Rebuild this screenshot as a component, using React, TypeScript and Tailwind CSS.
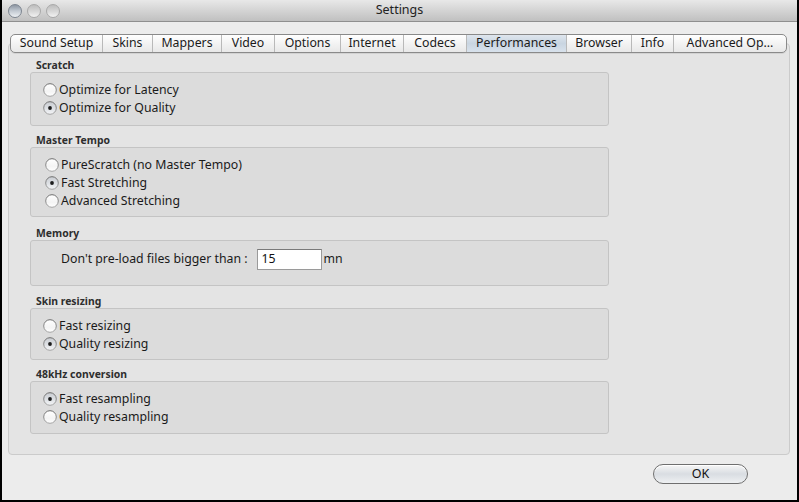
import React from "react";

const font = { fontFamily: '"Lucida Grande", "Noto Sans", "DejaVu Sans", sans-serif' };

function Radio({ checked }: { checked?: boolean }) {
  return (
    <svg width="14" height="14" viewBox="0 0 14 14" className="shrink-0">
      <defs>
        <linearGradient id={checked ? "rc" : "ru"} x1="0" y1="0" x2="0" y2="1">
          {checked ? (
            <>
              <stop offset="0" stopColor="#c9ccd1" />
              <stop offset="0.5" stopColor="#dcdfe3" />
              <stop offset="1" stopColor="#f4f5f7" />
            </>
          ) : (
            <>
              <stop offset="0" stopColor="#ffffff" />
              <stop offset="0.6" stopColor="#f4f4f4" />
              <stop offset="1" stopColor="#ffffff" />
            </>
          )}
        </linearGradient>
        <linearGradient id="rb" x1="0" y1="0" x2="0" y2="1">
          <stop offset="0" stopColor="#6d6d6d" />
          <stop offset="1" stopColor="#a5a5a5" />
        </linearGradient>
      </defs>
      <circle cx="7" cy="7" r="6.3" fill={`url(#${checked ? "rc" : "ru"})`} stroke="url(#rb)" strokeWidth="1" />
      {checked && <circle cx="7" cy="7" r="1.9" fill="#1c1c1c" />}
    </svg>
  );
}

function RadioRow({ label, checked }: { label: string; checked?: boolean }) {
  return (
    <div className="flex items-center h-[18px] gap-[2px]">
      <Radio checked={checked} />
      <span className="text-[12.3px] text-[#1a1a1a] leading-none">{label}</span>
    </div>
  );
}

function Group({
  title,
  height,
  mt,
  pl,
  pt,
  children,
}: {
  title: string;
  height: number;
  mt: string;
  pl: string;
  pt: string;
  children: React.ReactNode;
}) {
  return (
    <div className={mt}>
      <div className="h-[14px] flex items-center pl-[6px] text-[10.4px] font-bold text-[#2e2e2e] leading-none">
        {title}
      </div>
      <div
        className={`w-[579px] bg-[#dcdcdc] border border-[#c4c4c4] rounded-[3px] ${pl} ${pt}`}
        style={{ height }}
      >
        {children}
      </div>
    </div>
  );
}

const tabs = [
  ["Sound Setup", 93],
  ["Skins", 50],
  ["Mappers", 69],
  ["Video", 53],
  ["Options", 66],
  ["Internet", 63],
  ["Codecs", 63],
  ["Performances", 100],
  ["Browser", 65],
  ["Info", 42],
  ["Advanced Op...", 113],
] as const;

export default function App() {
  return (
    <div className="w-[799px] h-[502px] bg-black pl-[2px] pr-[2px] pb-[2px] overflow-hidden" style={font}>
      <div className="w-full h-full bg-[#ececec] flex flex-col">
        {/* title bar */}
        <div className="relative h-[22px] shrink-0 bg-gradient-to-b from-[#e8e8e8] to-[#c0c0c0] border-b border-[#8f8f8f] flex items-center">
          <div className="flex items-center gap-[5px] pl-[6px]">
            {[0, 1, 2].map((i) => (
              <div
                key={i}
                className={`w-[14px] h-[14px] rounded-full border ${
                  i === 0
                    ? "border-[#7d8590] bg-gradient-to-b from-[#8d96a2] via-[#c3cad2] to-[#eef1f4]"
                    : "border-[#a9a9a9] bg-gradient-to-b from-[#bdbdbd] via-[#d6d6d6] to-[#f2f2f2]"
                }`}
              />
            ))}
          </div>
          <div className="absolute inset-0 flex items-center justify-center text-[12.5px] text-[#222] pointer-events-none">
            Settings
          </div>
        </div>

        {/* body */}
        <div className="flex flex-col pl-[6px]">
          {/* tabs */}
          <div className="mt-[12px] ml-[2px] h-[19px] flex relative z-10">
            <div className="flex rounded-[5px] border border-[#8a8a8a] overflow-hidden bg-gradient-to-b from-[#ffffff] via-[#f3f3f3] to-[#e8e8e8] shadow-[0_1px_0_rgba(0,0,0,0.08)]">
              {tabs.map(([t, w], i) => (
                <div
                  key={t}
                  className={`h-full flex items-center justify-center text-[12.3px] leading-none text-[#1a1a1a] ${
                    i > 0 ? "border-l border-[#b9b9b9]" : ""
                  } ${t === "Performances" ? "bg-gradient-to-b from-[#dfe6ee] via-[#c9d5e1] to-[#d8e2ec]" : ""}`}
                  style={{ width: i === 0 ? w - 2 : w }}
                >
                  {t}
                </div>
              ))}
            </div>
          </div>

          {/* panel */}
          <div className="-mt-[10px] w-[782px] h-[412px] bg-[#e4e4e4] border border-[#cbcbcb] rounded-[4px] pl-[21px] pt-[14px]">
            <Group title="Scratch" height={54} mt="" pl="pl-[12px]" pt="pt-[8px]">
              <RadioRow label="Optimize for Latency" />
              <RadioRow label="Optimize for Quality" checked />
            </Group>
            <Group title="Master Tempo" height={70} mt="mt-[7px]" pl="pl-[14px]" pt="pt-[8px]">
              <RadioRow label="PureScratch (no Master Tempo)" />
              <RadioRow label="Fast Stretching" checked />
              <RadioRow label="Advanced Stretching" />
            </Group>
            <Group title="Memory" height={46} mt="mt-[9px]" pl="pl-[30px]" pt="pt-[8px]">
              <div className="flex items-center h-[21px]">
                <span className="text-[12.3px] text-[#1a1a1a] leading-none">Don't pre-load files bigger than :</span>
                <div className="ml-[9px] w-[65px] h-[21px] bg-white border border-[#9a9a9a] border-t-[#7a7a7a] flex items-center pl-[4px] text-[12.3px] text-[#111]">
                  15
                </div>
                <span className="ml-[2px] text-[12.3px] text-[#1a1a1a] leading-none">mn</span>
              </div>
            </Group>
            <Group title="Skin resizing" height={52} mt="mt-[8px]" pl="pl-[12px]" pt="pt-[8px]">
              <RadioRow label="Fast resizing" />
              <RadioRow label="Quality resizing" checked />
            </Group>
            <Group title="48kHz conversion" height={53} mt="mt-[7px]" pl="pl-[12px]" pt="pt-[8px]">
              <RadioRow label="Fast resampling" checked />
              <RadioRow label="Quality resampling" />
            </Group>
          </div>

          {/* footer */}
          <div className="flex justify-end pr-[49px] mt-[9px]">
            <button className="w-[95px] h-[20px] rounded-full border border-[#6f6f6f] bg-gradient-to-b from-[#f6f6f6] via-[#d9dde2] to-[#eef0f2] text-[12.5px] text-[#111] leading-none shadow-[inset_0_1px_0_#fff]">
              OK
            </button>
          </div>
        </div>
      </div>
    </div>
  );
}
